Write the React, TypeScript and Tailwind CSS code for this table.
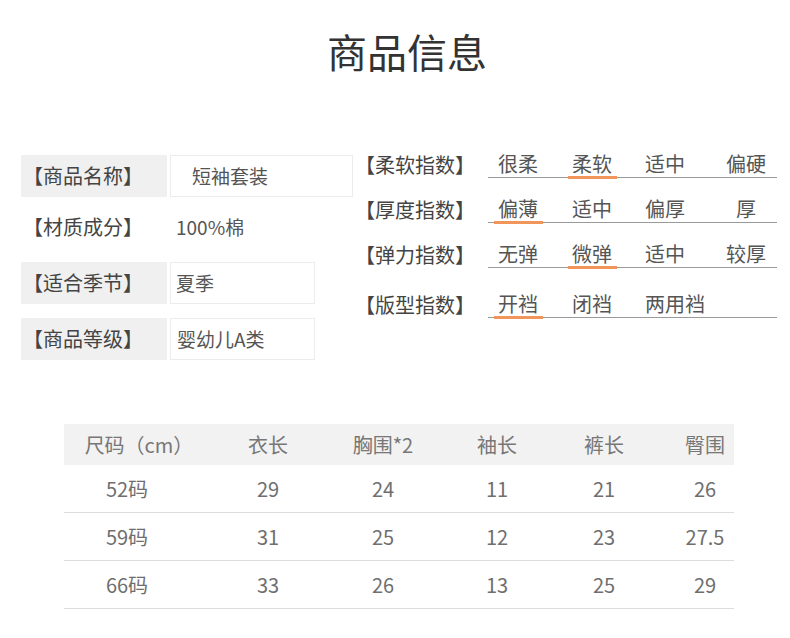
const font = "font-['Noto_Sans_CJK_SC','Noto_Sans',sans-serif]";

const basics = [
  { label: "【商品名称】", value: "短袖套装", box: "w-[183px] pl-[21px]", shaded: true, row: "mt-[3px]" },
  { label: "【材质成分】", value: "100%棉", box: "w-[183px] pl-[5px] border-transparent", shaded: false, row: "mt-[9px]" },
  { label: "【适合季节】", value: "夏季", box: "w-[145px] pl-[5px]", shaded: true, row: "mt-[14px]" },
  { label: "【商品等级】", value: "婴幼儿A类", box: "w-[145px] pl-[6px]", shaded: true, row: "mt-[14px]" },
];

const slots = ["w-[74px]", "w-[73px]", "w-[81px]", "w-[55px]"];

const indexes = [
  { label: "【柔软指数】", options: ["很柔", "柔软", "适中", "偏硬"], active: 1, wide: -1, row: "mb-[19px]" },
  { label: "【厚度指数】", options: ["偏薄", "适中", "偏厚", "厚"], active: 0, wide: 3, row: "mb-[19px]" },
  { label: "【弹力指数】", options: ["无弹", "微弹", "适中", "较厚"], active: 1, wide: -1, row: "mb-[24px]" },
  { label: "【版型指数】", options: ["开裆", "闭裆", "两用裆"], active: 0, wide: -1, row: "" },
];

const header = ["尺码（cm）", "衣长", "胸围*2", "袖长", "裤长", "臀围"];
const sizes = [
  ["52码", "29", "24", "11", "21", "26"],
  ["59码", "31", "25", "12", "23", "27.5"],
  ["66码", "33", "26", "13", "25", "29"],
];
const cols = "grid grid-cols-[132px_144px_86px_142px_72px_94px]";

export default function App() {
  return (
    <div className={`w-[790px] h-[638px] bg-white overflow-hidden ${font}`}>
      {/* Title */}
      <h1 className="pt-[27px] pl-6 text-center text-[40px] leading-[48px] text-[#333]">商品信息</h1>

      <div className="mt-[77px] flex">
        {/* Basic info */}
        <div className="pl-[21px] w-[355px]">
          {basics.map((item) => (
            <div key={item.label} className={`flex h-[42px] ${item.row}`}>
              <div
                className={`w-[146px] pl-[2px] flex items-center text-[20px] text-[#444] ${
                  item.shaded ? "bg-[#f0f0f0]" : ""
                }`}
              >
                {item.label}
              </div>
              <div className={`ml-[3px] flex items-center border border-[#ececec] text-[19px] text-[#555] ${item.box}`}>
                {item.value}
              </div>
            </div>
          ))}
        </div>

        {/* Index scales */}
        <div>
          {indexes.map((row) => (
            <div key={row.label} className={`flex ${row.row}`}>
              <div className="w-[133px] text-[20px] leading-[25px] text-[#444]">{row.label}</div>
              <div className="w-[289px] h-[26px] flex pl-[6px] border-b border-[#9a9a9a]">
                {row.options.map((opt, i) => (
                  <div key={opt} className={slots[i]}>
                    <span
                      className={`inline-block text-[20px] leading-[24px] text-[#555] border-b-[3px] pr-[5px] ${
                        i === row.wide ? "pl-[14px]" : "pl-[4px]"
                      } ${i === row.active ? "border-[#f2955a]" : "border-transparent"}`}
                    >
                      {opt}
                    </span>
                  </div>
                ))}
              </div>
            </div>
          ))}
        </div>
      </div>

      {/* Size table */}
      <div className="mt-[64px] ml-[64px] w-[670px] text-[20px] text-[#6f6f6f]">
        <div className={`${cols} h-[41px] items-center bg-[#f2f2f2] text-[#777]`}>
          {header.map((h, i) => (
            <div key={h} className={i === 5 ? "pl-9 text-center" : i === 0 ? "pl-[18px] text-center" : "text-center"}>
              {h}
            </div>
          ))}
        </div>
        {sizes.map((r) => (
          <div key={r[0]} className={`${cols} h-[48px] items-center border-b border-[#dcdcdc]`}>
            {r.map((c, i) => (
              <div key={i} className={i === 5 ? "pl-9 text-center" : i === 0 ? "pr-[6px] text-center" : "text-center"}>
                {c}
              </div>
            ))}
          </div>
        ))}
      </div>
    </div>
  );
}
